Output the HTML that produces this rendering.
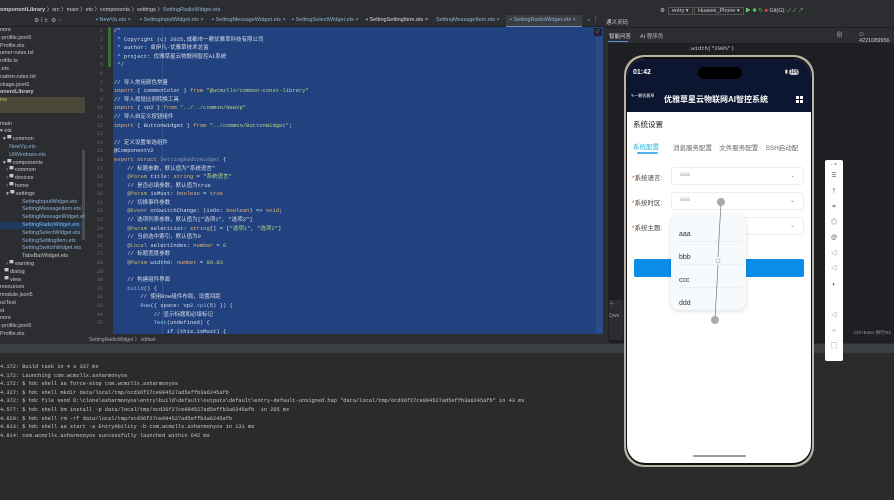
<!DOCTYPE html>
<html><head><meta charset="utf-8"><style>
*{margin:0;padding:0;box-sizing:border-box}
body{width:894px;height:500px;overflow:hidden;background:#2b2b2b;font-family:"Liberation Sans","Noto Sans CJK SC",sans-serif;position:relative;color:#bbb}
.a{position:absolute}
.mono{font-family:"Liberation Mono","Noto Sans CJK SC",monospace}
#code div{height:8.6px;line-height:8.6px;font-size:5.5px;white-space:pre;color:#d8dde8}
.c{color:#8a96b0}.k{color:#e8b26a}.s{color:#b5d38a}.an{color:#c5b26a}.f{color:#7fb4e8}.n{color:#8fcfe8}
#tree div{height:7.8px;line-height:7.8px;font-size:5.5px;white-space:nowrap;color:#c8c8c8}
#term div{height:8.6px;line-height:8.6px;font-size:5.3px;white-space:pre;color:#c8c8c8}
.tab{position:absolute;top:17px;font-size:5.5px;color:#8fb1d6}
</style></head><body>
<div class="a" style="left:0;top:0;width:894px;height:15px;background:#2b2d30"></div>
<div class="a" style="left:0;top:5px;font-size:5.5px;color:#ccc;white-space:nowrap"><b>omponentLibrary</b> 〉src 〉main 〉ets 〉components 〉settings 〉<span style="color:#8fb1d6">SettingRadioWidget.ets</span></div>
<div class="a" style="left:0;top:15px;width:604px;height:12px;background:#2b2d30;border-bottom:1px solid #1e1f22"></div>
<div class="a" style="left:34px;top:17px;font-size:6px;color:#aaa">⚙ I ± &nbsp;⚙ −</div>
<div class="tab" style="left:96px">▪ NewVp.ets ×</div>
<div class="tab" style="left:140px">▪ SettingInputWidget.ets ×</div>
<div class="tab" style="left:212px">▪ SettingMessageWidget.ets ×</div>
<div class="tab" style="left:292px">▪ SettingSelectWidget.ets ×</div>
<div class="tab" style="left:366px;color:#ddd">▪ SettingSettingItem.ets ×</div>
<div class="tab" style="left:436px">SettingMessageItem.ets ×</div>
<div class="a" style="left:506px;top:15px;width:76px;height:12px;background:#3a3d42;border-bottom:1px solid #6a8fc4"></div>
<div class="tab" style="left:510px">▪ SettingRadioWidget.ets ×</div>
<div class="a" style="left:586px;top:16px;font-size:6px;color:#aaa">⌄ ⋮</div>
<div class="a" style="left:660px;top:6px;font-size:5.5px;color:#ccc;white-space:nowrap">⚙ &nbsp;<span style="border:1px solid #555;padding:0 3px">entry ▾</span> <span style="border:1px solid #555;padding:0 3px">Huawei_Phone ▾</span> <span style="color:#6c6">▶ ✱ ↻</span> <span style="color:#d44">■</span> Git(G): <span style="color:#6c6">✓ ✓ ↗</span></div>
<div class="a" style="left:0;top:27px;width:85px;height:318px;background:#2b2d30"></div>
<div class="a" style="left:0;top:97px;width:85px;height:16px;background:#4a4838"></div>
<div class="a" style="left:0;top:222px;width:85px;height:7px;background:#1c3a5e"></div>
<div class="a" style="left:82px;top:150px;width:3px;height:90px;background:#4a4c50"></div>
<div id="tree" class="a" style="left:0;top:27px;width:85px;overflow:hidden">
<div>nore</div><div>-profile.json5</div><div>Profile.ets</div><div>umer-rules.txt</div><div>rofile.ts</div><div>.ets</div><div>cation-rules.txt</div><div>ckage.json5</div><div style="font-weight:bold">onentLibrary</div><div style="color:#c9b76a">ine</div><div></div><div></div><div>main</div><div>▾ ets</div><div>&nbsp;&nbsp;▾ ▀ common</div><div style="color:#8fb1d6">&nbsp;&nbsp;&nbsp;&nbsp;&nbsp;&nbsp;NewVp.ets</div><div style="color:#8fb1d6">&nbsp;&nbsp;&nbsp;&nbsp;&nbsp;&nbsp;UIWindows.ets</div><div>&nbsp;&nbsp;▾ ▀ components</div><div>&nbsp;&nbsp;&nbsp;&nbsp;› ▀ common</div><div>&nbsp;&nbsp;&nbsp;&nbsp;› ▀ devices</div><div>&nbsp;&nbsp;&nbsp;&nbsp;› ▀ home</div><div>&nbsp;&nbsp;&nbsp;&nbsp;▾ ▀ settings</div>
<div style="color:#8fb1d6;padding-left:22px">SettingInputWidget.ets</div><div style="color:#8fb1d6;padding-left:22px">SettingMessageItem.ets</div><div style="color:#8fb1d6;padding-left:22px">SettingMessageWidget.ets</div><div style="color:#8fb1d6;padding-left:22px">SettingRadioWidget.ets</div><div style="color:#8fb1d6;padding-left:22px">SettingSelectWidget.ets</div><div style="color:#8fb1d6;padding-left:22px">SettingSettingItem.ets</div><div style="color:#8fb1d6;padding-left:22px">SettingSwitchWidget.ets</div><div style="padding-left:22px">TabsBarWidget.ets</div>
<div>&nbsp;&nbsp;&nbsp;&nbsp;› ▀ warning</div><div>&nbsp;&nbsp;&nbsp;▀ dialog</div><div>&nbsp;&nbsp;&nbsp;▀ view</div><div>resources</div><div>module.json5</div><div>osTest</div><div>st</div><div>nore</div><div>-profile.json5</div><div>Profile.ets</div>
</div>
<div class="a" style="left:85px;top:27px;width:28px;height:307px;background:#2b2d30"></div>
<div class="a mono" style="left:85px;top:27px;width:18px;font-size:5px;color:#6a6d73;text-align:right;line-height:8.6px">1<br>2<br>3<br>4<br>5<br>6<br>7<br>8<br>9<br>10<br>11<br>12<br>13<br>14<br>15<br>16<br>17<br>18<br>19<br>20<br>21<br>22<br>23<br>24<br>25<br>26<br>27<br>28<br>29<br>30<br>31<br>32<br>33<br>34<br>35</div>
<div class="a" style="left:108px;top:27px;width:3px;height:40px;background:#3d6b3d"></div>
<div class="a" style="left:117px;top:181px;font-size:7px;color:#f5b82e">●</div>
<div class="a" style="left:113px;top:27px;width:490px;height:307px;background:#21427e"></div>
<div class="a" style="left:162px;top:27px;width:1px;height:307px;background:#2f5490"></div>
<div class="a" style="left:596px;top:27px;width:7px;height:307px;background:#2a4a88"></div>
<div class="a" style="left:594px;top:28px;width:8px;height:8px;background:#223;font-size:5px;color:#6c6;text-align:center">✓</div>
<div id="code" class="a mono" style="left:114px;top:27px;width:480px;height:307px;overflow:hidden">
<div class="c">/*</div><div class="c"> * Copyright (c) 2025,成都市一颗优雅草科技有限公司</div><div class="c"> * author: 卓伊凡-优雅草技术总监</div><div class="c"> * project: 优雅草星云物联网智控AI系统</div><div class="c"> */</div><div></div>
<div class="c">// 导入常用颜色常量</div><div><span class="k">import</span> { commonColor } <span class="k">from</span> <span class="s">"@wcmzllx/common-const-library"</span></div><div class="c">// 导入视觉比例转换工具</div><div><span class="k">import</span> { vp2 } <span class="k">from</span> <span class="s">"../../common/NewVp"</span></div><div class="c">// 导入自定义按钮组件</div><div><span class="k">import</span> { ButtonWidget } <span class="k">from</span> <span class="s">"../common/ButtonWidget"</span>;</div><div></div>
<div class="c">// 定义设置单选组件</div><div class="an">@ComponentV2</div><div><span class="k">export struct</span> <span class="c">SettingRadioWidget</span> {</div>
<div class="c">    // 标题参数，默认值为"系统语言"</div><div>    <span class="an">@Param</span> title: <span class="k">string</span> = <span class="s">"系统语言"</span></div><div class="c">    // 是否必填参数，默认值为true</div><div>    <span class="an">@Param</span> isMust: <span class="k">boolean</span> = <span class="k">true</span></div><div class="c">    // 切换事件参数</div><div>    <span class="an">@Event</span> onSwitchChange: (isOn: <span class="k">boolean</span>) => <span class="k">void</span>;</div><div class="c">    // 选项列表参数，默认值为["选项1", "选项2"]</div><div>    <span class="an">@Param</span> selectList: <span class="k">string</span>[] = [<span class="s">"选项1"</span>, <span class="s">"选项2"</span>]</div><div class="c">    // 当前选中索引，默认值为0</div><div>    <span class="an">@Local</span> selectIndex: <span class="k">number</span> = <span class="s">0</span></div><div class="c">    // 标题宽度参数</div><div>    <span class="an">@Param</span> width0: <span class="k">number</span> = <span class="s">89.83</span></div><div></div>
<div class="c">    // 构建组件界面</div><div>    <span class="f">build</span>() {</div><div class="c">        // 使用Row组件布局，设置间距</div><div>        <span class="n">Row</span>({ space: vp2.<span class="f">vp2</span>(5) }) {</div><div class="c">            // 显示标题和必填标记</div><div>            <span class="n">Text</span>(undefined) {</div><div>                if (this.isMust) {</div>
</div>
<div class="a" style="left:85px;top:334px;width:519px;height:10px;background:#2b2d30;font-size:5px;color:#aaa;padding:2px 4px">SettingRadioWidget 〉 isMust</div>
<div class="a" style="left:0;top:344px;width:894px;height:9px;background:#3c3f41"></div>
<div id="term" class="a mono" style="left:0;top:363px;width:600px">
<div>4.172: Build task in 4 s 337 ms</div><div>4.172: Launching com.wcmzllx.axharmonyos</div><div>4.172: $ hdc shell aa force-stop com.wcmzllx.axharmonyos</div><div>4.327: $ hdc shell mkdir data/local/tmp/ocd36f27ce094527ad5effb3a6245afb</div><div>4.372: $ hdc file send D:\clone\axharmonyos\entry\build\default\outputs\default\entry-default-unsigned.hap "data/local/tmp/ocd36f27ce094527ad5effb3a6245afb" in 43 ms</div><div>4.577: $ hdc shell bm install -p data/local/tmp/ocd36f27ce094527ad5effb3a6245afb  in 205 ms</div><div>4.620: $ hdc shell rm -rf data/local/tmp/ocd36f27ce094527ad5effb3a6245afb</div><div>4.813: $ hdc shell aa start -a EntryAbility -b com.wcmzllx.axharmonyos in 131 ms</div><div>4.814: com.wcmzllx.axharmonyos successfully launched within 642 ms</div>
</div>
<div class="a" style="left:604px;top:15px;width:290px;height:329px;background:#2b2d30"></div>
<div class="a" style="left:606px;top:18px;font-size:5.5px;color:#ccc">通义灵码</div>
<div class="a" style="left:604px;top:27px;width:290px;height:1px;background:#1e1f22"></div>
<div class="a" style="left:609px;top:32px;font-size:5.5px;color:#ddd">智能问答</div>
<div class="a" style="left:608px;top:41px;width:20px;height:1px;background:#5b8fd6"></div>
<div class="a" style="left:640px;top:32px;font-size:5.5px;color:#bbb">AI 程序员</div>
<div class="a" style="left:836px;top:30px;font-size:7px;color:#aaa">⊕</div>
<div class="a" style="left:859px;top:32px;font-size:5.5px;color:#ccc">⚇ 4221089956</div>
<div class="a" style="left:608px;top:43px;width:286px;height:300px;background:#1e1f22;border-radius:3px"></div>
<div class="a mono" style="left:688px;top:45px;font-size:5.5px;color:#ccc">.width("200%")</div>
<div class="a" style="left:609px;top:300px;width:14px;height:40px;background:#2b2d30;font-size:5px;color:#999">＋<br><br>Qwe</div>
<div class="a" style="left:854px;top:330px;font-size:4.5px;color:#999">Ctrl+Enter 换行/Es</div>
<div class="a" style="left:624px;top:55px;width:190px;height:412px;border-radius:20px;background:#b9b3a5"></div>
<div class="a" style="left:626px;top:57px;width:186px;height:408px;border-radius:19px;background:#111"></div>
<div class="a" style="left:627px;top:59px;width:184px;height:404px;border-radius:18px;background:#fff;overflow:hidden">
 <div class="a" style="left:0;top:0;width:184px;height:53px;background:#0c1630"></div>
 <div class="a" style="left:6px;top:10px;font-size:7px;color:#fff;font-weight:bold">01:42</div>
 <div class="a" style="left:71px;top:8px;width:44px;height:12px;border-radius:6px;background:#000"></div>
 <div class="a" style="left:158px;top:10px;font-size:5px;color:#fff">▮ <span style="background:#ccc;color:#000;border-radius:3px;padding:0 1px">100</span></div>
 <div class="a" style="left:4px;top:34px;font-size:4px;color:#fff">✎一颗优雅草</div>
 <div class="a" style="left:37px;top:35px;font-size:8px;color:#fff;font-weight:bold">优雅草星云物联网AI智控系统</div>
 <div class="a" style="left:169px;top:37px;width:7px;height:7px;background:linear-gradient(#fff 0 40%,transparent 40% 60%,#fff 60%);"></div>
 <div class="a" style="left:172px;top:37px;width:1px;height:7px;background:#0c1630"></div>
 <div class="a" style="left:6px;top:60px;font-size:7.5px;color:#222">系统设置</div>
 <div class="a" style="left:6px;top:82px;font-size:6.5px;color:#1fb6d9">系统配置</div>
 <div class="a" style="left:10px;top:93px;width:21px;height:2px;background:#4fb4e8;border-radius:1px"></div>
 <div class="a" style="left:46px;top:83px;font-size:6.5px;color:#666;white-space:nowrap">消息服务配置 &nbsp;&nbsp; 文件服务配置 &nbsp;&nbsp; SSH启动配</div>
 <div class="a" style="left:5px;top:113px;font-size:6.5px;color:#444"><span style="color:#e33">*</span>系统语言:</div>
 <div class="a" style="left:5px;top:138px;font-size:6.5px;color:#444"><span style="color:#e33">*</span>系统时区:</div>
 <div class="a" style="left:5px;top:163px;font-size:6.5px;color:#444"><span style="color:#e33">*</span>系统主题:</div>
 <div class="a" style="left:44px;top:108px;width:133px;height:18px;border:1px solid #eee;border-radius:3px;font-size:6px;color:#aaa;padding:4px 8px">aaa<span style="float:right;color:#888">⌄</span></div>
 <div class="a" style="left:44px;top:133px;width:133px;height:18px;border:1px solid #eee;border-radius:3px;font-size:6px;color:#aaa;padding:4px 8px">aaa<span style="float:right;color:#888">⌄</span></div>
 <div class="a" style="left:44px;top:158px;width:133px;height:18px;border:1px solid #eee;border-radius:3px;font-size:6px;color:#aaa;padding:4px 8px"><span style="float:right;color:#888">⌄</span></div>
 <div class="a" style="left:7px;top:200px;width:170px;height:18px;background:#0a8de8;border-radius:2px"></div>
 <div class="a" style="left:44px;top:156px;width:75px;height:95px;background:#f7fafc;border-radius:8px;box-shadow:0 1px 5px rgba(0,0,0,.15)"></div>
 <div class="a" style="left:52px;top:164px;font-size:7px;color:#333;line-height:23px">aaa<br>bbb<br>ccc<br>ddd</div>
 <div class="a" style="left:52px;top:182px;width:62px;height:1px;background:#eee"></div>
 <div class="a" style="left:52px;top:205px;width:62px;height:1px;background:#eee"></div>
 <div class="a" style="left:52px;top:228px;width:62px;height:1px;background:#eee"></div>
 <svg class="a" style="left:0;top:0" width="184" height="404"><line x1="94" y1="143" x2="91" y2="198" stroke="#777" stroke-width=".7"/><line x1="91" y1="206" x2="88" y2="260" stroke="#777" stroke-width=".7"/><circle cx="94" cy="143" r="4" fill="#aaa"/><circle cx="91" cy="202" r="2" fill="#fff" stroke="#888" stroke-width=".6"/><circle cx="88" cy="261" r="4" fill="#aaa"/></svg>
 <div class="a" style="left:66px;top:396px;width:53px;height:2px;background:#999;border-radius:1px"></div>
</div>
<div class="a" style="left:825px;top:160px;width:18px;height:201px;background:#fff;border-radius:2px;font-size:6px;color:#555;text-align:center;line-height:15.5px;padding-top:1px">
<div style="font-size:5px;line-height:8px">- ×</div>☰<br>⤒<br>⌗<br>◎<br>@<br>◁<br>◁<br>◐<br><br>◁<br>○<br>▢</div>
</body></html>
